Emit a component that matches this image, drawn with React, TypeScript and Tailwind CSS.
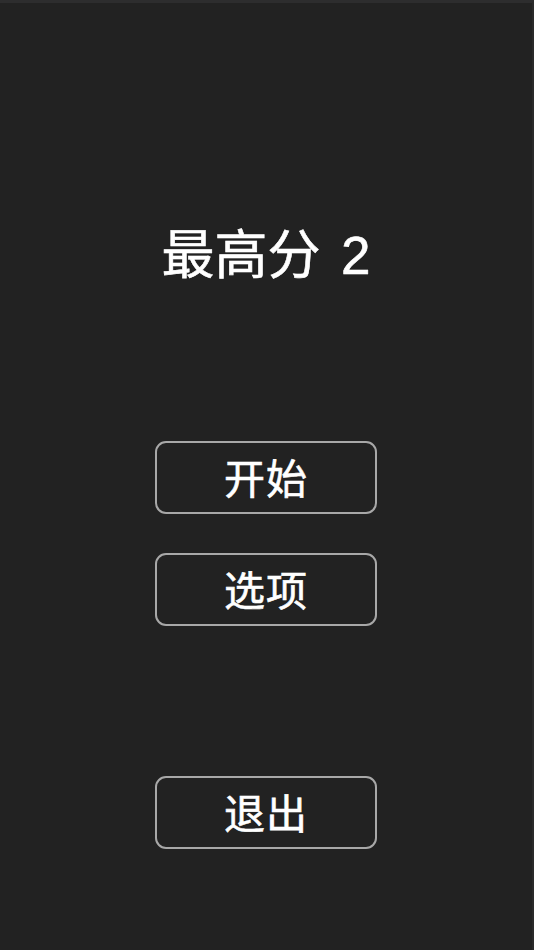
export default function App() {
    const font = { fontFamily: '"Liberation Sans", "Noto Sans CJK SC", sans-serif' }

    return (
        <div
            className="h-[950px] w-full bg-[#222222] border-t-[3px] border-t-[#2d2d2e] border-r-2 border-r-[#2a2a2a] flex flex-col items-center text-white"
            style={font}
        >
            {/* Title */}

            <h1 className="mt-[222px] h-[60px] flex items-center text-[53px] leading-none font-normal [-webkit-text-stroke:0.6px_#fff]">
                最高分<span className="ml-[6px]">&nbsp;2</span>
            </h1>

            {/* Menu */}

            <div className="mt-[156px] flex flex-col gap-[39px]">
                <MenuButton label="开始" />
                <MenuButton label="选项" />
            </div>

            <div className="mt-[150px]">
                <MenuButton label="退出" />
            </div>
        </div>
    )
}

function MenuButton({ label }: { label: string }) {
    return (
        <button
            className="w-[222px] h-[73px] rounded-[11px] border-2 border-[#a8a8a8] bg-transparent flex items-center justify-center pt-[5px] text-[41px] leading-none text-white tracking-[1px] [-webkit-text-stroke:0.6px_#fff]"
        >
            {label}
        </button>
    )
}
